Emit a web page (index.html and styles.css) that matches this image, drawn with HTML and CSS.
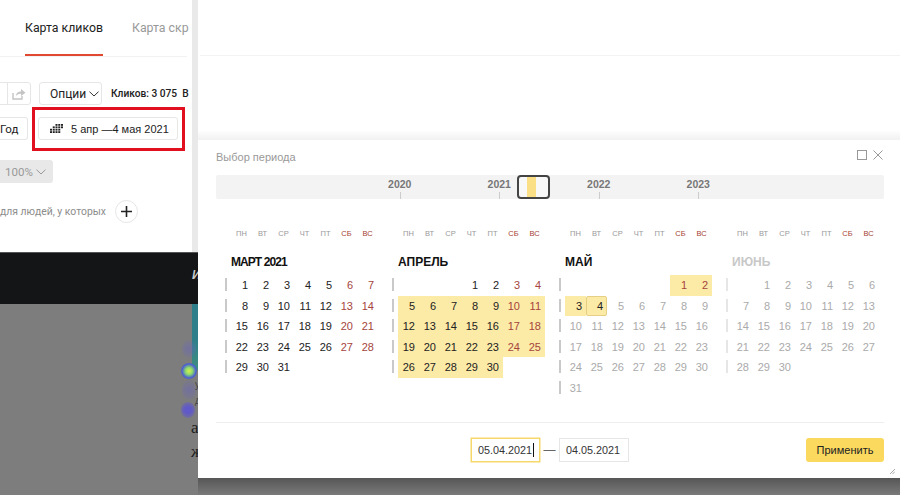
FILE: index.html
```html
<!DOCTYPE html>
<html lang="ru">
<head>
  <meta charset="UTF-8" />
  <meta name="viewport" content="width=device-width, initial-scale=1.0" />
  <title>Выбор периода</title>
  <link rel="stylesheet" href="styles.css">
</head>
<body>
<div class="screen">

  <!-- page behind the panel -->
  <div class="report">
    <div class="report-top">
      <div class="tabs">
        <span class="tab active">Карта кликов</span>
        <span class="tab">Карта скр</span>
      </div>
      <div class="tool-row first">
        <span class="btn stub"></span>
        <span class="btn share">
          <svg width="14" height="12" viewBox="0 0 14 12"><path d="M1 5v6h9V8" fill="none" stroke="#c4c4c4" stroke-width="1.4"/><path d="M4 8c0-3 2-4.500 5-4.500V1l4.500 3.800L9 8V5.700C7 5.700 5 6.300 4 8z" fill="#c4c4c4"/></svg>
        </span>
        <span class="btn options">Опции
          <svg class="chevron" width="10" height="6" viewBox="0 0 10 6"><path d="M.5.700l4.500 4.300L9.500.700" fill="none" stroke="#333" stroke-width="1"/></svg>
        </span>
        <span class="clicks">Кликов: 3 075 &nbsp;В</span>
      </div>
      <div class="tool-row second">
        <span class="btn year">Год</span>
        <span class="btn date-range">
          <svg width="13" height="9" viewBox="0 0 13 9" fill="#222">
            <rect x="5.500" y="0" width="2" height="1.800"/><rect x="8.250" y="0" width="2" height="1.800"/><rect x="11" y="0" width="2" height="1.800"/>
            <rect x="2.750" y="2.400" width="2" height="1.800"/><rect x="5.500" y="2.400" width="2" height="1.800"/><rect x="8.250" y="2.400" width="2" height="1.800"/><rect x="11" y="2.400" width="2" height="1.800"/>
            <rect x="0" y="4.800" width="2" height="1.800"/><rect x="2.750" y="4.800" width="2" height="1.800"/><rect x="5.500" y="4.800" width="2" height="1.800"/><rect x="8.250" y="4.800" width="2" height="1.800"/>
            <rect x="0" y="7.200" width="2" height="1.800"/><rect x="2.750" y="7.200" width="2" height="1.800"/><rect x="5.500" y="7.200" width="2" height="1.800"/><rect x="8.250" y="7.200" width="2" height="1.800"/>
          </svg>
          5 апр —4 мая 2021
        </span>
      </div>
      <div class="scale-row">
        <span class="scale">100%
          <svg class="chevron" width="10" height="6" viewBox="0 0 10 6"><path d="M.5.700l4.500 4.300L9.500.700" fill="none" stroke="#999" stroke-width="1"/></svg>
        </span>
      </div>
      <div class="people-row">
        <span class="people">для людей, у которых</span>
        <span class="plus">
          <svg width="11" height="11" viewBox="0 0 11 11"><path d="M5.500 0v11M0 5.500h11" stroke="#222" stroke-width="1.600"/></svg>
        </span>
      </div>
      <div class="red-box"></div>
    </div>
    <div class="dark-band"><span class="band-letter">И</span></div>
    <div class="dimmed">
      <div class="teal"></div>
      <div class="heat heat-1"></div>
      <div class="heat heat-2"></div>
      <div class="heat heat-3"></div>
      <div class="heat heat-4"></div>
      <span class="snippet snippet-1">у</span>
      <span class="snippet snippet-2">д</span>
      <span class="snippet snippet-3">а</span>
      <span class="snippet snippet-4">ж</span>
    </div>
  </div>

  <!-- side panel -->
  <div class="panel">
    <div class="panel-top">
      <div class="panel-line"></div>
    </div>

    <div class="dialog">
      <div class="dialog-head">
        <span class="dialog-title">Выбор периода</span>
        <span class="dialog-icons">
          <svg width="10" height="10" viewBox="0 0 10 10"><rect x=".5" y=".5" width="9" height="9" fill="none" stroke="#999"/></svg>
          <svg width="10" height="10" viewBox="0 0 10 10"><path d="M.5.500l9 9M9.500.500l-9 9" stroke="#999" fill="none"/></svg>
        </span>
      </div>

      <div class="timeline">
        <div class="year-mark">2020</div>
        <div class="year-mark">2021</div>
        <div class="year-mark">2022</div>
        <div class="year-mark">2023</div>
        <div class="thumb"><span class="thumb-fill"></span></div>
      </div>

      <div class="months">
        <div class="month">
          <div class="weekdays"><span>пн</span><span>вт</span><span>ср</span><span>чт</span><span>пт</span><span>сб</span><span>вс</span></div>
          <div class="month-name tight">Март 2021</div>
          <div class="days">
            <span>1</span><span>2</span><span>3</span><span>4</span><span>5</span><span>6</span><span>7</span>
            <span>8</span><span>9</span><span>10</span><span>11</span><span>12</span><span>13</span><span>14</span>
            <span>15</span><span>16</span><span>17</span><span>18</span><span>19</span><span>20</span><span>21</span>
            <span>22</span><span>23</span><span>24</span><span>25</span><span>26</span><span>27</span><span>28</span>
            <span>29</span><span>30</span><span>31</span>
          </div>
        </div>

        <div class="month">
          <div class="weekdays"><span>пн</span><span>вт</span><span>ср</span><span>чт</span><span>пт</span><span>сб</span><span>вс</span></div>
          <div class="month-name">Апрель</div>
          <div class="days">
            <span></span><span></span><span></span><span>1</span><span>2</span><span>3</span><span>4</span>
            <span class="sel">5</span><span class="sel">6</span><span class="sel">7</span><span class="sel">8</span><span class="sel">9</span><span class="sel">10</span><span class="sel">11</span>
            <span class="sel">12</span><span class="sel">13</span><span class="sel">14</span><span class="sel">15</span><span class="sel">16</span><span class="sel">17</span><span class="sel">18</span>
            <span class="sel">19</span><span class="sel">20</span><span class="sel">21</span><span class="sel">22</span><span class="sel">23</span><span class="sel">24</span><span class="sel">25</span>
            <span class="sel">26</span><span class="sel">27</span><span class="sel">28</span><span class="sel">29</span><span class="sel">30</span>
          </div>
        </div>

        <div class="month">
          <div class="weekdays"><span>пн</span><span>вт</span><span>ср</span><span>чт</span><span>пт</span><span>сб</span><span>вс</span></div>
          <div class="month-name">Май</div>
          <div class="days">
            <span></span><span></span><span></span><span></span><span></span><span class="sel">1</span><span class="sel">2</span>
            <span class="sel">3</span><span class="sel end">4</span><span class="off">5</span><span class="off">6</span><span class="off">7</span><span class="off">8</span><span class="off">9</span>
            <span class="off">10</span><span class="off">11</span><span class="off">12</span><span class="off">13</span><span class="off">14</span><span class="off">15</span><span class="off">16</span>
            <span class="off">17</span><span class="off">18</span><span class="off">19</span><span class="off">20</span><span class="off">21</span><span class="off">22</span><span class="off">23</span>
            <span class="off">24</span><span class="off">25</span><span class="off">26</span><span class="off">27</span><span class="off">28</span><span class="off">29</span><span class="off">30</span>
            <span class="off">31</span>
          </div>
        </div>

        <div class="month future">
          <div class="weekdays"><span>пн</span><span>вт</span><span>ср</span><span>чт</span><span>пт</span><span>сб</span><span>вс</span></div>
          <div class="month-name">Июнь</div>
          <div class="days">
            <span></span><span class="off">1</span><span class="off">2</span><span class="off">3</span><span class="off">4</span><span class="off">5</span><span class="off">6</span>
            <span class="off">7</span><span class="off">8</span><span class="off">9</span><span class="off">10</span><span class="off">11</span><span class="off">12</span><span class="off">13</span>
            <span class="off">14</span><span class="off">15</span><span class="off">16</span><span class="off">17</span><span class="off">18</span><span class="off">19</span><span class="off">20</span>
            <span class="off">21</span><span class="off">22</span><span class="off">23</span><span class="off">24</span><span class="off">25</span><span class="off">26</span><span class="off">27</span>
            <span class="off">28</span><span class="off">29</span><span class="off">30</span>
          </div>
        </div>
      </div>

      <div class="dialog-foot">
        <div class="range">
          <span class="date-input focus">05.04.2021<span class="caret"></span></span>
          <span class="dash">—</span>
          <span class="date-input">04.05.2021</span>
        </div>
        <button class="apply">Применить</button>
      </div>
      <svg class="grip" width="5" height="5" viewBox="0 0 5 5"><path d="M0 5l5-5M2.500 5L5 2.500" stroke="#aaa" fill="none"/></svg>
    </div>

    <div class="panel-bottom"></div>
  </div>
</div>
</body>
</html>
```

FILE: styles.css
```css
* {
  box-sizing: border-box;
}
html, body {
  margin: 0;
  padding: 0;
}
body {
  font-family: 'Liberation Sans', Arial, sans-serif;
  color: #222;
  background-color: #7d7d7d;
}
.screen {
  display: flex;
  width: 900px;
  height: 495px;
  overflow: hidden;
}

/* Report behind the panel */
.report {
  width: 198px;
  height: 495px;
  overflow: hidden;
  flex: none;
  display: flex;
  flex-direction: column;
}
.report-top {
  position: relative;
  height: 252px;
  background-color: #fff;
  border-right: 6px solid #e9e9e9;
  overflow: hidden;
}
.tabs {
  display: flex;
  gap: 29px;
  width: 187px;
  height: 57px;
  padding-left: 25px;
  white-space: nowrap;
  border-bottom: 1px solid #f2f2f2;
  font-family: Roboto, sans-serif;
  font-size: 12.300px;
}
.tab {
  height: 56px;
  line-height: 56px;
  color: #999;
}
.tab.active {
  color: #222;
  border-bottom: 2px solid #e0492f;
}
.tool-row {
  display: flex;
  align-items: center;
  white-space: nowrap;
  height: 23px;
}
.tool-row.first {
  margin-top: 25px;
}
.tool-row.second {
  margin-top: 12px;
}
.btn {
  display: flex;
  align-items: center;
  justify-content: center;
  height: 23px;
  background-color: #fff;
  border: 1px solid #e6e6e6;
  border-radius: 3px;
  font-size: 12px;
}
.btn.stub {
  width: 8px;
  border-left: 0;
  border-radius: 0;
}
.btn.share {
  width: 24px;
  margin-left: -1px;
  border-radius: 0 3px 3px 0;
}
.btn.options {
  width: 63px;
  margin-left: 8px;
  gap: 3px;
  justify-content: flex-start;
  padding-left: 10px;
  font-family: Roboto, sans-serif;
}
.clicks {
  margin-left: 9px;
  font-family: Roboto, sans-serif;
  font-weight: 500;
  font-size: 10.200px;
}
.btn.year {
  width: 28px;
  border-left: 0;
  border-radius: 0 3px 3px 0;
  justify-content: flex-start;
  font-family: Roboto, sans-serif;
  font-size: 11.500px;
}
.btn.date-range {
  width: 140px;
  margin-left: 10px;
  gap: 8px;
  justify-content: flex-start;
  padding-left: 11px;
  font-size: 11px;
}
.scale-row {
  margin-top: 20px;
}
.scale {
  display: flex;
  align-items: center;
  gap: 3px;
  width: 53px;
  height: 23px;
  padding-left: 5px;
  background-color: #e8e8e8;
  border-radius: 0 3px 3px 0;
  color: #999;
  font-family: Roboto, sans-serif;
  font-size: 11.500px;
}
.people-row {
  display: flex;
  align-items: center;
  margin-top: 17px;
  height: 22px;
}
.people {
  width: 115px;
  color: #8c8c8c;
  font-family: Roboto, sans-serif;
  font-size: 10.400px;
  white-space: nowrap;
}
.plus {
  display: flex;
  align-items: center;
  justify-content: center;
  width: 23px;
  height: 23px;
  border: 1px solid #e6e6e6;
  border-radius: 50%;
}
.red-box {
  position: absolute;
  left: 32px;
  top: 107px;
  width: 153px;
  height: 44px;
  border: 3px solid #e2101f;
}
.dark-band {
  position: relative;
  height: 52px;
  background-color: #141517;
  border-top: 1px solid #555;
}
.band-letter {
  position: absolute;
  left: 192px;
  top: 15px;
  color: #ccc;
  font-weight: bold;
  font-style: italic;
  font-size: 12px;
}
.dimmed {
  position: relative;
  flex: 1;
  background-color: #7d7d7d;
}
.teal {
  position: absolute;
  left: 192px;
  top: 0;
  width: 6px;
  height: 66px;
  background: linear-gradient(160deg, #2f7f8a 55%, #3f8f7f);
}
.heat {
  position: absolute;
  border-radius: 50%;
}
.heat-1 {
  left: 181px;
  top: 59px;
  width: 16px;
  height: 16px;
  background: radial-gradient(circle, #d8ee50 0, #8fdc6a 30%, #4a5fd0 62%, rgba(90, 90, 200, 0) 100%);
}
.heat-2 {
  left: 182px;
  top: 36px;
  width: 14px;
  height: 18px;
  background: radial-gradient(circle, rgba(105, 100, 190, .5) 0, rgba(105, 100, 190, 0) 100%);
}
.heat-3 {
  left: 182px;
  top: 76px;
  width: 14px;
  height: 20px;
  background: radial-gradient(circle, rgba(105, 100, 190, .5) 0, rgba(105, 100, 190, 0) 100%);
}
.heat-4 {
  left: 181px;
  top: 98px;
  width: 14px;
  height: 16px;
  background: radial-gradient(circle, rgba(93, 85, 208, .9) 30%, rgba(90, 85, 200, 0) 100%);
}
.snippet {
  position: absolute;
  color: #1c1c1c;
  font-family: 'Liberation Serif', serif;
  font-size: 17px;
  line-height: 20px;
}
.snippet-1, .snippet-2 {
  left: 195px;
  color: #444;
  font-family: 'Liberation Sans', sans-serif;
  font-size: 10px;
  line-height: 12px;
}
.snippet-1 {
  top: 75px;
}
.snippet-2 {
  top: 91px;
}
.snippet-3 {
  left: 191px;
  top: 114px;
}
.snippet-4 {
  left: 191px;
  top: 138px;
}

/* Side panel */
.panel {
  flex: 1;
  display: flex;
  flex-direction: column;
}
.panel-top {
  height: 140px;
  background: linear-gradient(#fff 130px, #f1f1f1 140px);
}
.panel-line {
  height: 56px;
  margin-left: 2px;
  border-bottom: 1px solid #f3f3f3;
}
.dialog {
  position: relative;
  display: flex;
  flex-direction: column;
  height: 338px;
  background-color: #fff;
}
.dialog-head {
  display: flex;
  justify-content: space-between;
  align-items: center;
  height: 35px;
  padding: 0 17px 0 18px;
}
.dialog-title {
  margin-top: -1px;
  color: #999;
  font-size: 11px;
}
.dialog-icons {
  display: flex;
  gap: 6px;
  margin-top: -5px;
}
.timeline {
  position: relative;
  display: flex;
  height: 24px;
  margin: 0 16px 0 18px;
  padding-left: 134px;
  background-color: #f3f3f3;
  border-radius: 2px;
}
.year-mark {
  position: relative;
  width: 99.500px;
  text-align: center;
  color: #777;
  font-size: 10.500px;
  font-weight: bold;
  line-height: 19px;
}
.year-mark::after {
  content: "";
  position: absolute;
  left: 50%;
  bottom: 0;
  width: 1px;
  height: 7px;
  background-color: #ccc;
}
.thumb {
  position: absolute;
  left: 301px;
  top: 0;
  width: 33px;
  height: 24px;
  background-color: #f8f8f8;
  border: 2px solid #444;
  border-radius: 4px;
}
.thumb-fill {
  display: block;
  width: 9px;
  height: 100%;
  margin-left: 8px;
  background-color: #fbdf86;
}
.months {
  display: flex;
  gap: 14px;
  margin-top: 29px;
  padding-left: 27px;
}
.month {
  width: 153px;
}
.weekdays, .days {
  display: grid;
  grid-template-columns: repeat(7, 21px);
  padding-left: 6px;
}
.weekdays {
  height: 12px;
  line-height: 12px;
  text-align: center;
  text-transform: uppercase;
  font-size: 7.500px;
  color: #999;
}
.weekdays span:nth-child(n+6) {
  color: #a5402f;
}
.month-name {
  height: 16px;
  margin-top: 14px;
  padding-left: 6px;
  line-height: 16px;
  text-transform: uppercase;
  font-size: 12px;
  font-weight: bold;
  color: #111;
}
.month-name.tight {
  letter-spacing: -.9px;
}
.future .month-name {
  color: #c8c8c8;
}
.days {
  margin-top: 5px;
  grid-auto-rows: 20.500px;
  background-image: repeating-linear-gradient(to bottom, transparent 0, transparent 3px, #c9c9c9 3px, #c9c9c9 16px, transparent 16px, transparent 20.500px);
  background-size: 2px 100%;
  background-repeat: no-repeat;
}
.future .days {
  background-image: repeating-linear-gradient(to bottom, transparent 0, transparent 3px, #e6e6e6 3px, #e6e6e6 16px, transparent 16px, transparent 20.500px);
}
.days span {
  padding-right: 4px;
  text-align: right;
  line-height: 20.500px;
  font-size: 11px;
  color: #222;
}
.days span:nth-child(7n+6), .days span:nth-child(7n) {
  color: #a5453d;
}
.days span.sel {
  background-color: #fceaa7;
}
.days span.end {
  border: 1px solid #e6cf85;
  border-radius: 2px;
  padding-right: 3px;
  line-height: 18.500px;
}
.days span.off {
  color: #aaa;
}
.dialog-foot {
  display: grid;
  grid-template-columns: 1fr auto 1fr;
  align-items: center;
  height: 56px;
  margin: auto 16px 0 18px;
  padding-bottom: 1px;
  border-top: 1px solid #eee;
}
.range {
  grid-column: 2;
  display: flex;
  align-items: center;
}
.date-input {
  display: flex;
  align-items: center;
  width: 70px;
  height: 24px;
  padding-left: 6px;
  border: 1px solid #e6e6e6;
  font-size: 10.800px;
  color: #333;
}
.date-input.focus {
  width: 69px;
  border: 1px solid #f6d86a;
  box-shadow: 0 0 0 .5px #f6d86a;
}
.caret {
  width: 1px;
  height: 14px;
  margin-left: 1px;
  background-color: #111;
}
.dash {
  width: 19px;
  text-align: center;
  color: #666;
  font-size: 12px;
}
.apply {
  grid-column: 3;
  justify-self: end;
  width: 78px;
  height: 24px;
  padding: 0;
  background-color: #fad95e;
  border: none;
  border-radius: 3px;
  font-family: 'Liberation Sans', Arial, sans-serif;
  font-size: 11px;
  color: #222;
}
.grip {
  position: absolute;
  right: 5px;
  bottom: 4px;
}
.panel-bottom {
  flex: 1;
  background: linear-gradient(#565656, #7a7a7a);
}
```
